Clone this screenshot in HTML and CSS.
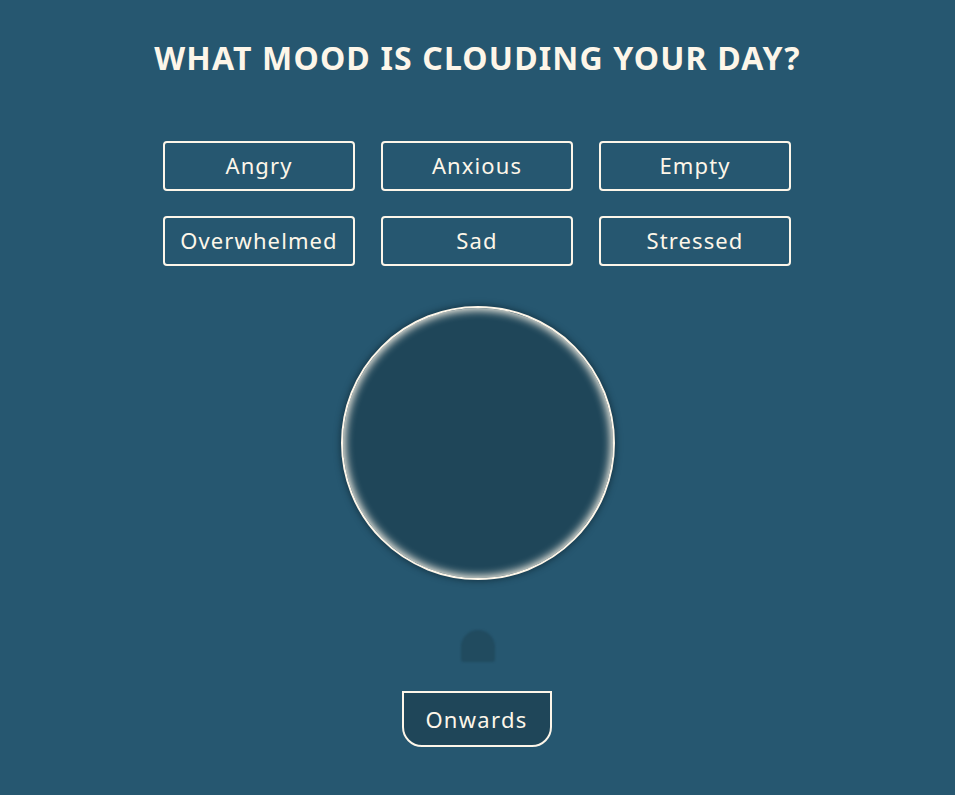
FILE: index.html
```html
<!DOCTYPE html>
<html lang="en">
<head>
<meta charset="utf-8">
<title>Mood</title>
<link rel="stylesheet" href="styles.css">
</head>
<body>
<main class="page">
  <h1 class="title">WHAT MOOD IS CLOUDING YOUR DAY?</h1>
  <div class="moods">
    <button class="mood">Angry</button>
    <button class="mood">Anxious</button>
    <button class="mood">Empty</button>
    <button class="mood">Overwhelmed</button>
    <button class="mood">Sad</button>
    <button class="mood">Stressed</button>
  </div>
  <div class="orb"></div>
  <div class="drop"></div>
  <button class="onwards">Onwards</button>
</main>
</body>
</html>
```

FILE: styles.css
```css
html, body {
  margin: 0;
  padding: 0;
  background: #265770;
}
body {
  width: 955px;
  height: 795px;
  overflow: hidden;
  font-family: "Noto Sans", "Open Sans", sans-serif;
  color: #fdf6e9;
}
.page {
  display: flex;
  flex-direction: column;
  align-items: center;
  padding-top: 37px;
}
.title {
  margin: 0;
  font-size: 32px;
  line-height: 42px;
  font-weight: 700;
  letter-spacing: 1.15px;
  color: #fdf6e9;
}
.moods {
  margin-top: 62px;
  display: grid;
  grid-template-columns: repeat(3, 192px);
  column-gap: 26px;
  row-gap: 25px;
  margin-right: 1px;
}
.mood {
  height: 50px;
  box-sizing: border-box;
  border: 2px solid #fdf6e9;
  border-radius: 4px;
  background: transparent;
  color: #fdf6e9;
  font-family: inherit;
  font-size: 22px;
  padding: 0 0 2px;
  letter-spacing: 1.1px;
}
.orb {
  margin-top: 40px;
  width: 274px;
  height: 274px;
  box-sizing: border-box;
  border-radius: 50%;
  border: 2px solid #fdf6e9;
  background: #1f4659;
  box-shadow: inset 0 0 8px 2px #fdf6e9, 0 0 6px 1px rgba(10, 30, 40, 0.6);
}
.drop {
  margin-top: 50px;
  width: 34px;
  height: 32px;
  border-radius: 17px 17px 3px 3px;
  background: #214b5f;
  filter: blur(1px);
}
.onwards {
  margin-top: 29px;
  margin-right: 2px;
  width: 150px;
  height: 56px;
  box-sizing: border-box;
  border: 2px solid #fdf6e9;
  border-radius: 0 0 20px 20px;
  background: #1f4659;
  color: #fdf6e9;
  font-family: inherit;
  font-size: 22px;
  letter-spacing: 1.3px;
  padding: 0;
}
```
